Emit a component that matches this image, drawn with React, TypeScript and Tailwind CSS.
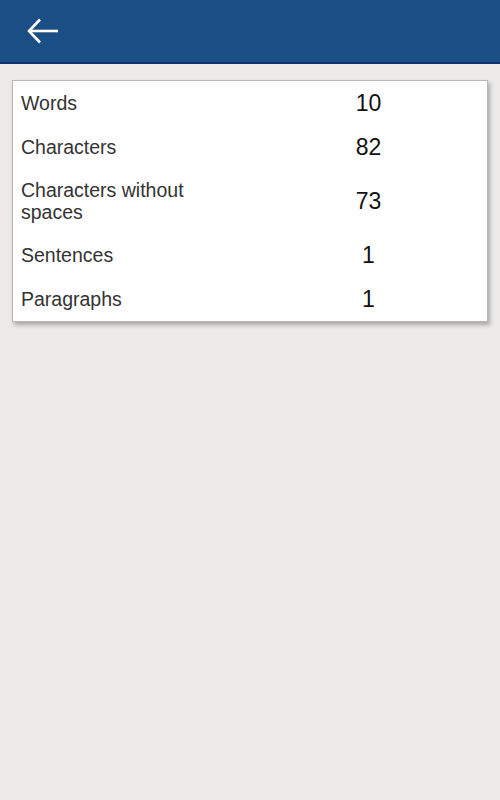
import React from "react";

const STATS: { label: string; value: string }[] = [
  { label: "Words", value: "10" },
  { label: "Characters", value: "82" },
  { label: "Characters without spaces", value: "73" },
  { label: "Sentences", value: "1" },
  { label: "Paragraphs", value: "1" },
];

export default function App() {
  return (
    <div className="min-h-[800px] w-[500px] bg-[#ebeae8] font-['Liberation_Sans',Arial,sans-serif]">
      {/* App bar */}
      <header className="flex h-[64px] items-center border-b-2 border-[#0f3070] bg-[#1c4e86] pl-[27px]">
        <svg width="31" height="26" viewBox="0 0 31 26" fill="none" stroke="white" strokeWidth="2.6" strokeLinecap="butt">
          <path d="M2 13 H31" />
          <path d="M13 1.5 L2 13 L13 24.5" />
        </svg>
      </header>

      {/* Stats card */}
      <div className="mx-[12px] mt-[16px] border border-[#b8b8b8] bg-white shadow-[2px_3px_4px_rgba(0,0,0,0.28)]">
        {STATS.map((s) => (
          <div key={s.label} className="grid grid-cols-2 items-center py-[10px]">
            <div className="pl-[8px] pr-[10px] text-[19.5px] leading-[22px] text-[#333]">{s.label}</div>
            <div className="text-center text-[23px] leading-[24px] text-[#111]">{s.value}</div>
          </div>
        ))}
      </div>
    </div>
  );
}
